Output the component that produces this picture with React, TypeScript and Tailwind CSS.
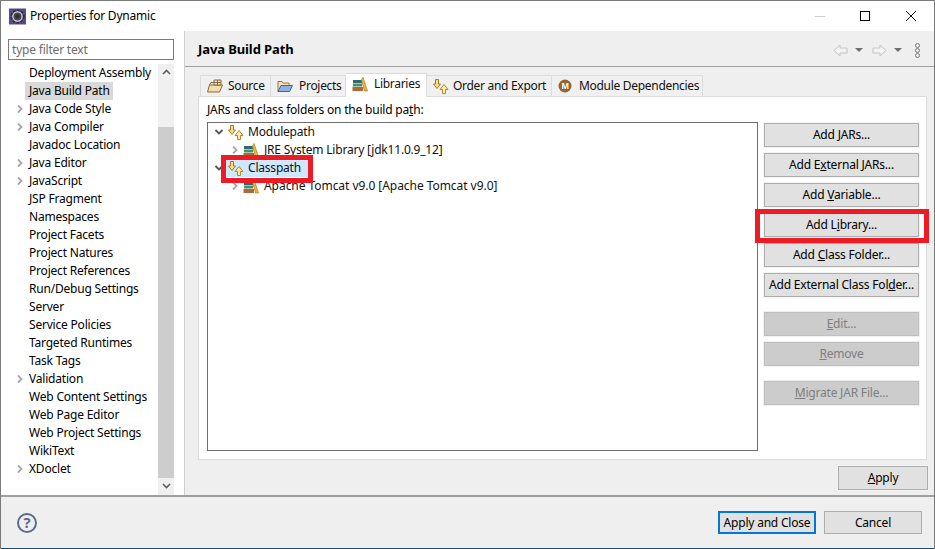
import { ReactNode } from 'react';

const font = { fontFamily: '"Noto Sans", "Open Sans", sans-serif' };

const prefs: [string, boolean][] = [
  ['Deployment Assembly', false],
  ['Java Build Path', false],
  ['Java Code Style', true],
  ['Java Compiler', true],
  ['Javadoc Location', false],
  ['Java Editor', true],
  ['JavaScript', true],
  ['JSP Fragment', false],
  ['Namespaces', false],
  ['Project Facets', false],
  ['Project Natures', false],
  ['Project References', false],
  ['Run/Debug Settings', false],
  ['Server', false],
  ['Service Policies', false],
  ['Targeted Runtimes', false],
  ['Task Tags', false],
  ['Validation', true],
  ['Web Content Settings', false],
  ['Web Page Editor', false],
  ['Web Project Settings', false],
  ['WikiText', false],
  ['XDoclet', true],
];

function Chevron({ open = false }: { open?: boolean }) {
  return (
    <svg width="10" height="10" viewBox="0 0 10 10" className="shrink-0">
      {open ? (
        <path d="M1.5 3 L5 6.5 L8.5 3" fill="none" stroke="#555" strokeWidth="1.8" />
      ) : (
        <path d="M3 1.5 L6.5 5 L3 8.5" fill="none" stroke="#a8a8a8" strokeWidth="1.8" />
      )}
    </svg>
  );
}

function ArrowsIcon() {
  return (
    <svg width="16" height="15" viewBox="0 0 16 15" className="shrink-0">
      <path d="M2.5 0.5h3v4.5h2l-3.5 4.5L0.5 5h2z" fill="#f8dc8c" stroke="#a87a20" />
      <path d="M9.5 14.5v-4H7L11 5.5l4 5h-2.5v4z" fill="#fbe9a8" stroke="#b5862a" />
    </svg>
  );
}

function BooksIcon() {
  return (
    <svg width="16" height="15" viewBox="0 0 16 15" className="shrink-0">
      <rect x="1" y="3" width="9" height="3" fill="#2d6a78" />
      <rect x="1" y="6.5" width="9" height="3" fill="#4f8f5f" />
      <rect x="0.5" y="10" width="10.5" height="4" fill="#b0683a" />
      <path d="M11 0.5 L15.5 14 L12.5 14 L9.5 3z" fill="#eab93f" stroke="#a87a20" strokeWidth="0.7" />
    </svg>
  );
}

function SourceIcon() {
  return (
    <svg width="16" height="14" viewBox="0 0 16 14" className="shrink-0">
      <path d="M0.5 13 L2.5 6h13l-3 7z" fill="#f3dfae" stroke="#8a6a3a" />
      <path d="M2.5 6 L4 3.5h4" fill="none" stroke="#8a6a3a" />
      <path d="M7 1h7v5H7zM10.5 1v5M7 3.5h7" fill="#f6e7c0" stroke="#7a5a30" strokeWidth="0.9" />
    </svg>
  );
}

function ProjectsIcon() {
  return (
    <svg width="16" height="14" viewBox="0 0 16 14" className="shrink-0">
      <path d="M1 12.5V2.5h4l1 1.5h6v3" fill="#f3e3b4" stroke="#8a7a50" />
      <path d="M1 12.5 L4 6.5h11.5l-3 6z" fill="#8fb0e0" stroke="#44659a" />
    </svg>
  );
}

function ModuleIcon() {
  return (
    <svg width="14" height="14" viewBox="0 0 14 14" className="shrink-0">
      <circle cx="7" cy="7" r="6.5" fill="#96642f" />
      <text x="7" y="10" textAnchor="middle" fontSize="8" fontWeight="700" fill="#fff" style={font}>M</text>
    </svg>
  );
}

function NavArrow({ left = false }: { left?: boolean }) {
  return (
    <svg width="15" height="13" viewBox="0 0 15 13" className="shrink-0">
      <path
        d={left ? 'M14 4H7V1L1 6.5 7 12V9h7z' : 'M1 4h7V1l6 5.5L8 12V9H1z'}
        fill="#f4f4f4"
        stroke="#c4c4c4"
      />
    </svg>
  );
}

function Caret() {
  return <span className="w-0 h-0 border-x-[4px] border-x-transparent border-t-[4px] border-t-[#707070]" />;
}

function Btn({ children, disabled = false, className = '' }: { children: ReactNode; disabled?: boolean; className?: string }) {
  return (
    <div
      className={`h-[24px] flex items-center justify-center border text-[12px] outline outline-1 ${
        disabled
          ? 'bg-[#cccccc] border-[#bfbfbf] text-[#7f7f7f] outline-[#f0f0f0]'
          : 'bg-[#e1e1e1] border-[#adadad] text-black outline-[#f4f4f4]'
      } ${className}`}
    >
      <span>{children}</span>
    </div>
  );
}

function Tab({ icon, label, active = false, className = '' }: { icon: ReactNode; label: string; active?: boolean; className?: string }) {
  return (
    <div
      className={`flex items-center border border-[#dcdcdc] border-l-0 first:border-l text-[12px] tracking-[-0.3px] text-[#111] pl-[6px] ${
        active ? 'h-[24px] bg-white border-b-0 pb-[3px]' : 'h-[22px] bg-[#f0f0f0]'
      } ${className}`}
    >
      {icon}
      <span className="leading-none">{label}</span>
    </div>
  );
}

export default function App() {
  return (
    <div className="w-[935px] h-[549px] relative overflow-hidden bg-[#efefef] border-x border-t border-[#7a7a7a] flex flex-col text-[12px] tracking-[-0.2px] text-black" style={font}>
      {/* title bar */}
      <div className="h-[30px] shrink-0 bg-white flex items-center pl-[8px]">
        <svg width="17" height="17" viewBox="0 0 17 17" className="shrink-0">
          <rect x="0" y="0.5" width="17" height="16" fill="#5b4a8a" />
          <circle cx="8.5" cy="8.5" r="6.2" fill="none" stroke="#333" strokeWidth="2" strokeDasharray="2.4 1.6" />
          <circle cx="8.5" cy="8.5" r="4.6" fill="#4a4a4a" stroke="#d8d8d8" strokeWidth="1.2" />
          <circle cx="8.5" cy="8.5" r="2.2" fill="#2e2e3a" />
        </svg>
        <span className="ml-[4px]">Properties for Dynamic</span>
        <div className="ml-auto flex items-center pr-[18px]">
          <div className="w-[10px] h-px bg-[#cfcfcf] mr-[35px]" />
          <div className="w-[10px] h-[10px] border border-black mr-[36px]" />
          <svg width="10" height="10" viewBox="0 0 10 10">
            <path d="M0 0 L10 10 M10 0 L0 10" stroke="#111" strokeWidth="1" />
          </svg>
        </div>
      </div>

      <div className="flex h-[464px] shrink-0">
        {/* preference tree */}
        <div className="w-[184px] shrink-0 bg-white flex flex-col pl-[7px] pr-[10px] pt-[8px] border-r border-[#cfcfcf]">
          <div className="h-[21px] border border-[#7a7a7a] flex items-center pl-[3px] text-[#6d6d6d]">type filter text</div>
          <div className="flex mt-[4px] flex-1 min-h-0">
            <div className="flex-1 flex flex-col">
              {prefs.map(([label, arrow]) => (
                <div key={label} className="h-[18px] flex items-center shrink-0">
                  <div className="w-[17px] flex justify-end">{arrow && <Chevron />}</div>
                  <span
                    className={`h-[18px] leading-[17px] pl-[4px] ${label === 'Java Build Path' ? 'bg-[#d9d9d9] pr-[3px]' : ''}`}
                  >
                    {label}
                  </span>
                </div>
              ))}
            </div>
            <div className="w-[16px] bg-[#f0f0f0] flex flex-col">
              <div className="h-[16px] flex items-center justify-center">
                <svg width="9" height="6" viewBox="0 0 9 6"><path d="M1 5 L4.5 1.5 L8 5" fill="none" stroke="#606060" strokeWidth="1.6" /></svg>
              </div>
              <div className="mt-[47px] h-[351px] bg-[#cdcdcd]" />
              <div className="h-[16px] flex items-center justify-center">
                <svg width="9" height="6" viewBox="0 0 9 6"><path d="M1 1 L4.5 4.5 L8 1" fill="none" stroke="#606060" strokeWidth="1.6" /></svg>
              </div>
            </div>
          </div>
        </div>

        {/* page */}
        <div className="flex-1 flex flex-col bg-[#efefef]">
          <div className="h-[36px] shrink-0 flex items-center border-b border-[#a0a0a0] pl-[13px] pr-[14px] pt-[3px]">
            <span className="text-[13px] font-bold tracking-[-0.1px]">Java Build Path</span>
            <div className="ml-auto flex items-center">
              <NavArrow left />
              <span className="ml-[7px] flex"><Caret /></span>
              <span className="ml-[9px] flex"><NavArrow /></span>
              <span className="ml-[7px] flex"><Caret /></span>
              <span className="ml-[13px] flex flex-col">
                <span className="w-[5px] h-[5px] rounded-full border border-[#777]" />
                <span className="w-[5px] h-[5px] rounded-full border border-[#777]" />
                <span className="w-[5px] h-[5px] rounded-full border border-[#777]" />
              </span>
            </div>
          </div>

          <div className="pl-[13px] pr-[7px] pt-[6px] flex-1 flex flex-col">
            <div className="flex items-end h-[24px] pl-[2px] relative z-10 -mb-px">
              <Tab icon={<SourceIcon />} label="Source" className="w-[71px] gap-[5px]" />
              <Tab icon={<ProjectsIcon />} label="Projects" className="w-[75px] gap-[6px]" />
              <Tab icon={<BooksIcon />} label="Libraries" active className="w-[81px] gap-[6px]" />
              <Tab icon={<ArrowsIcon />} label="Order and Export" className="w-[125px] gap-[4px]" />
              <Tab icon={<ModuleIcon />} label="Module Dependencies" className="w-[151px] gap-[7px]" />
            </div>
            <div className="h-[364px] bg-white border border-[#dcdcdc] pl-[8px] pr-[6px] pt-[5px] flex flex-col">
              <div className="h-[16px] leading-[16px]">JARs and class folders on the build pa<u>t</u>h:</div>
              <div className="flex mt-[4px] gap-[6px]">
                <div className="w-[551px] h-[329px] border border-[#6e6e6e] bg-white text-[#111]">
                  <div className="h-[18px] flex items-center pl-[6px]">
                    <Chevron open />
                    <span className="ml-[4px] flex"><ArrowsIcon /></span>
                    <span className="ml-[4px]">Modulepath</span>
                  </div>
                  <div className="h-[18px] flex items-center pl-[22px]">
                    <Chevron />
                    <span className="ml-[3px] flex"><BooksIcon /></span>
                    <span className="ml-[5px]">JRE System Library [jdk11.0.9_12]</span>
                  </div>
                  <div className="h-[18px] flex items-center pl-[6px]">
                    <Chevron open />
                    <div className="ml-[2px] pl-[2px] pr-[10px] h-[18px] bg-[#cde8ff] flex items-center">
                      <ArrowsIcon />
                      <span className="ml-[4px]">Classpath</span>
                    </div>
                  </div>
                  <div className="h-[18px] flex items-center pl-[22px]">
                    <Chevron />
                    <span className="ml-[3px] flex"><BooksIcon /></span>
                    <span className="ml-[5px] tracking-[-0.05px]">Apache Tomcat v9.0 [Apache Tomcat v9.0]</span>
                  </div>
                </div>
                <div className="w-[155px] flex flex-col pt-[1px]">
                  <Btn>Add <u>J</u>ARs...</Btn>
                  <Btn className="mt-[6px]">Add E<u>x</u>ternal JARs...</Btn>
                  <Btn className="mt-[6px]">Add <u>V</u>ariable...</Btn>
                  <Btn className="mt-[6px]">Add L<u>i</u>brary...</Btn>
                  <Btn className="mt-[6px]">Add <u>C</u>lass Folder...</Btn>
                  <Btn className="mt-[6px]">Add External Class Fol<u>d</u>er...</Btn>
                  <Btn disabled className="mt-[15px]"><u>E</u>dit...</Btn>
                  <Btn disabled className="mt-[6px]"><u>R</u>emove</Btn>
                  <Btn disabled className="mt-[15px]"><u>M</u>igrate JAR File...</Btn>
                </div>
              </div>
            </div>
            <div className="flex justify-end mt-[6px] -mr-[1px]">
              <Btn className="w-[90px]"><u>A</u>pply</Btn>
            </div>
          </div>
        </div>
      </div>

      {/* footer */}
      <div className="flex-1 border-t-2 border-[#a0a0a0] bg-[#efefef] flex items-center pl-[16px] pr-[12px] border-b border-b-[#1f4f6f]">
        <div className="w-[20px] h-[20px] rounded-full border-2 border-[#5b6b8c] flex items-center justify-center text-[15px] font-bold text-[#5b6b8c] leading-none">?</div>
        <div className="ml-auto flex gap-[8px]">
          <div className="w-[98px] h-[23px] border-2 border-[#0078d7] bg-[#e1e1e1] flex items-center justify-center">Apply and Close</div>
          <div className="w-[98px] h-[23px] border border-[#adadad] bg-[#e1e1e1] flex items-center justify-center">Cancel</div>
        </div>
      </div>

      {/* red annotations */}
      <div className="absolute left-[220px] top-[154px] w-[92px] h-[28px] border-[5px] border-[#ed1c24]" />
      <div className="absolute left-[754px] top-[208px] w-[174px] h-[34px] border-[5px] border-[#ed1c24]" />
    </div>
  );
}
